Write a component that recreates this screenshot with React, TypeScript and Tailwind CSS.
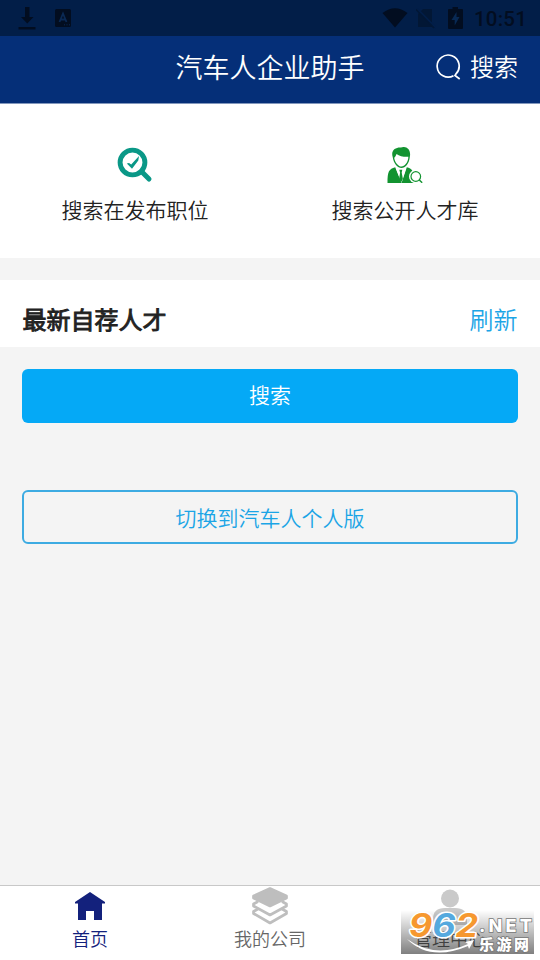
import type { ReactNode } from 'react';

function StatusBar() {
  return (
    <div className="flex h-9 items-center bg-[#021e48] pl-[18px] text-[#020d20]">
      <svg className="h-6 w-[18px]" viewBox="0 0 18 24" fill="currentColor">
        <path d="M7 1h4.500v10h4L9.300 17.500 3 11h4zM.5 21h17v2.500H.5z" />
      </svg>
      <svg className="ml-[19px] h-[18px] w-4" viewBox="0 0 16 18">
        <rect width="16" height="18" rx="1.500" fill="currentColor" />
        <path d="M4.500 13 8 4.500 11.500 13M5.800 10.500h4.400" fill="none" stroke="#0a2954" strokeWidth="1.800" />
        <path d="M9 15.800h1m1.500 0h1m1.500 0h1" stroke="#0a2954" />
      </svg>
      <svg className="ml-auto h-[21px] w-[26px]" viewBox="0 0 26 21" fill="currentColor">
        <path d="M.5 5Q13-4.500 25.500 5L13 19.500z" />
      </svg>
      <svg className="ml-[8px] h-[21px] w-5" viewBox="0 0 20 21">
        <path d="M7 1h9v18H2V6z" fill="#021735" />
        <path d="M.5 0 20 20" stroke="#021e48" strokeWidth="2" />
        <path d="M0 1.500 18 20" stroke="#021735" strokeWidth="1.500" />
      </svg>
      <svg className="ml-3 h-[22px] w-[15px]" viewBox="0 0 15 22">
        <path d="M4.500 0h5.500v2H14a1 1 0 0 1 1 1v18a1 1 0 0 1-1 1H1a1 1 0 0 1-1-1V3a1 1 0 0 1 1-1h3.500z" fill="currentColor" />
        <path d="M8.500 5 3.500 13h3.200v5.500L11.500 10H8.500z" fill="#082954" />
      </svg>
      <span className="mr-[13px] ml-[11px] w-[53px] pt-px text-right font-['Roboto',sans-serif] text-[20.500px] leading-6 font-medium tracking-[.2px]">10:51</span>
    </div>
  );
}

function Header() {
  return (
    <header className="grid h-[67px] grid-cols-[1fr_auto_1fr] items-center bg-[#052f78] pr-[22px] pl-[22px] text-white">
      <span />
      <h1 className="pb-[5px] text-[27px] leading-10">汽车人企业助手</h1>
      <div className="flex items-center justify-end pb-[8px] text-2xl leading-9">
        <svg className="mt-[2px] mr-2 h-[26px] w-[26px]" viewBox="0 0 26 26" fill="none" stroke="currentColor" strokeWidth="1.700">
          <path d="M17.500 21.700A11 11 0 1 1 20 19.800L19 21.500 23.700 25" />
        </svg>
        搜索
      </div>
    </header>
  );
}

function SearchCheckIcon() {
  return (
    <svg className="h-9 w-9" viewBox="0 0 36 36" fill="none">
      <path d="m24.500 24.500 7.500 7.500" stroke="#0a9887" strokeWidth="5" strokeLinecap="round" />
      <circle cx="15.500" cy="15.500" r="12.400" stroke="#0a9887" strokeWidth="4.900" />
      <path d="m9.800 16.600 2.200-.7 2.200 1.600 7.800-8.500-.7 4.500-6.300 8.200z" fill="#0a9887" />
    </svg>
  );
}

function TalentIcon() {
  return (
    <svg className="h-9 w-9" viewBox="0 0 36 36">
      <path d="M5.700 10C3.500 3 9 0 14 .5c5-2 10.500 2 8.800 9.500-.5 6.500-4.500 11-8.300 11S6.500 16.500 5.700 10" fill="#129330" />
      <path d="M7.200 10.700c1.200-1 1.800-2.200 2.300-3.700 3 2.300 7 3 11.900 2.800-.2 6-4 9.700-6.900 9.700s-6.700-3.700-7.300-8.800" fill="#fff" />
      <path d="M8.200 20.200 14.500 36l5.300-15.800c5 1.500 7.500 3 8.200 15.800H.5C.5 24 2 22 8.200 20.200" fill="#129330" />
      <path d="m9.500 21.200 4 2.200 4.500-2.200 1 .3L14.500 35.500 9 21.500z" fill="#fff" />
      <path d="M12.300 22.800h3l-.6 2.700 1.200 6.500-1.900 3.500-1.900-3.500 1-6.500z" fill="#129330" />
      <circle cx="28.800" cy="29.500" r="6.800" fill="#fff" />
      <circle cx="28.800" cy="29.500" r="4.800" fill="#fff" stroke="#129330" strokeWidth="1.200" />
      <path d="m32.300 33 2.900 2.700" stroke="#129330" strokeWidth="1.500" />
    </svg>
  );
}

function Shortcut({ icon, label }: { icon: ReactNode; label: string }) {
  return (
    <div className="flex flex-1 flex-col items-center pt-[43px]">
      {icon}
      <span className="mt-[10px] text-[21px] leading-8">{label}</span>
    </div>
  );
}

function Tab({ icon, label, active = false }: { icon: ReactNode; label: string; active?: boolean }) {
  return (
    <div className={`flex flex-1 flex-col items-center ${active ? 'text-[#13217c]' : 'text-[#666]'}`}>
      {icon}
      <span className="-mt-px text-lg leading-[26px]">{label}</span>
    </div>
  );
}

function Watermark() {
  return (
    <div className="absolute top-[910px] left-[401px] h-11 w-[133px] bg-linear-to-b from-black/0 to-black/50">
      <svg className="h-full w-full overflow-visible" viewBox="0 0 133 44">
        <path d="M6 29Q34 49 67 34l-3-2 9-2-5 9-1-3Q29 52 6 29" fill="#fff" />
        <text
          x="8"
          y="27"
          textLength="69"
          lengthAdjust="spacingAndGlyphs"
          fontFamily="Inter, sans-serif"
          fontWeight="700"
          fontStyle="italic"
          fontSize="32"
          stroke="#fff"
          strokeWidth="3"
          strokeLinejoin="round"
          paintOrder="stroke"
        >
          <tspan fill="#f6982f">9</tspan><tspan fill="#55a9de">6</tspan><tspan fill="#f6982f">2</tspan>
        </text>
        <g fill="#fff" stroke="#777" strokeWidth="1.500" paintOrder="stroke" fontWeight="800">
          <text x="78" y="22" fontFamily="Inter, sans-serif" fontSize="18" textLength="53">.NET</text>
          <text x="78" y="39.500" fontFamily="'Noto Sans CJK SC', sans-serif" fontSize="15" textLength="50">乐游网</text>
        </g>
      </svg>
    </div>
  );
}

export default function App() {
  return (
    <div className="relative flex h-[960px] w-[540px] flex-col overflow-hidden bg-[#f4f4f4] font-['Noto_Sans_CJK_SC',sans-serif] font-[350] text-[#222]">
      <StatusBar />
      <Header />
      <section className="flex h-[155px] border-t border-[#8297bc] bg-white">
        <Shortcut icon={<SearchCheckIcon />} label="搜索在发布职位" />
        <Shortcut icon={<TalentIcon />} label="搜索公开人才库" />
      </section>
      <section className="mt-[22px] flex h-[67px] items-center justify-between bg-white px-[22.500px] pt-[11px] text-2xl leading-9">
        <h2 className="font-normal [-webkit-text-stroke:0.9px_#222]">最新自荐人才</h2>
        <button className="text-[#1ba5e6]">刷新</button>
      </section>
      <main className="flex flex-1 flex-col px-[22.400px] pt-[22px] text-[21px] leading-8">
        <button className="h-[54px] rounded-md bg-[#05a9f6] pb-[5px] text-white">搜索</button>
        <button className="mt-[67.400px] h-[54px] rounded-md border-2 border-[#3dabe2] pb-px text-[#1ba5e6]">切换到汽车人个人版</button>
      </main>
      <nav className="flex h-[75px] border-t border-[#c8c8c8] bg-white">
        <Tab
          active
          label="首页"
          icon={
            <svg className="h-10 w-[30px]" viewBox="0 0 30 40" fill="currentColor">
              <path d="m15 6 15 10v1.500h-3V34h-8v-9h-8v9H3V17.500H0V16z" />
            </svg>
          }
        />
        <Tab
          label="我的公司"
          icon={
            <svg className="h-10 w-9" viewBox="0 0 36 40" fill="none" stroke="#bebebe" strokeWidth="2.700" strokeLinejoin="round">
              <path d="m6 23-4.500 2.500v2L18 37l16.500-9.500v-2L30 23" />
              <path d="m6 15.500-4.500 2.500v2L18 29l16.500-9v-2L30 15.500" />
              <path d="M18 2.500 34.500 10v2L18 20 1.500 12v-2z" fill="#bebebe" />
            </svg>
          }
        />
        <Tab
          label="管理中心"
          icon={
            <svg className="h-10 w-9" viewBox="0 0 36 40" fill="#cacaca">
              <circle cx="18" cy="12.500" r="9" />
              <path d="M1 39v-6Q1 22 13 22h10q12 0 12 11v6z" />
            </svg>
          }
        />
      </nav>
      <Watermark />
    </div>
  );
}
